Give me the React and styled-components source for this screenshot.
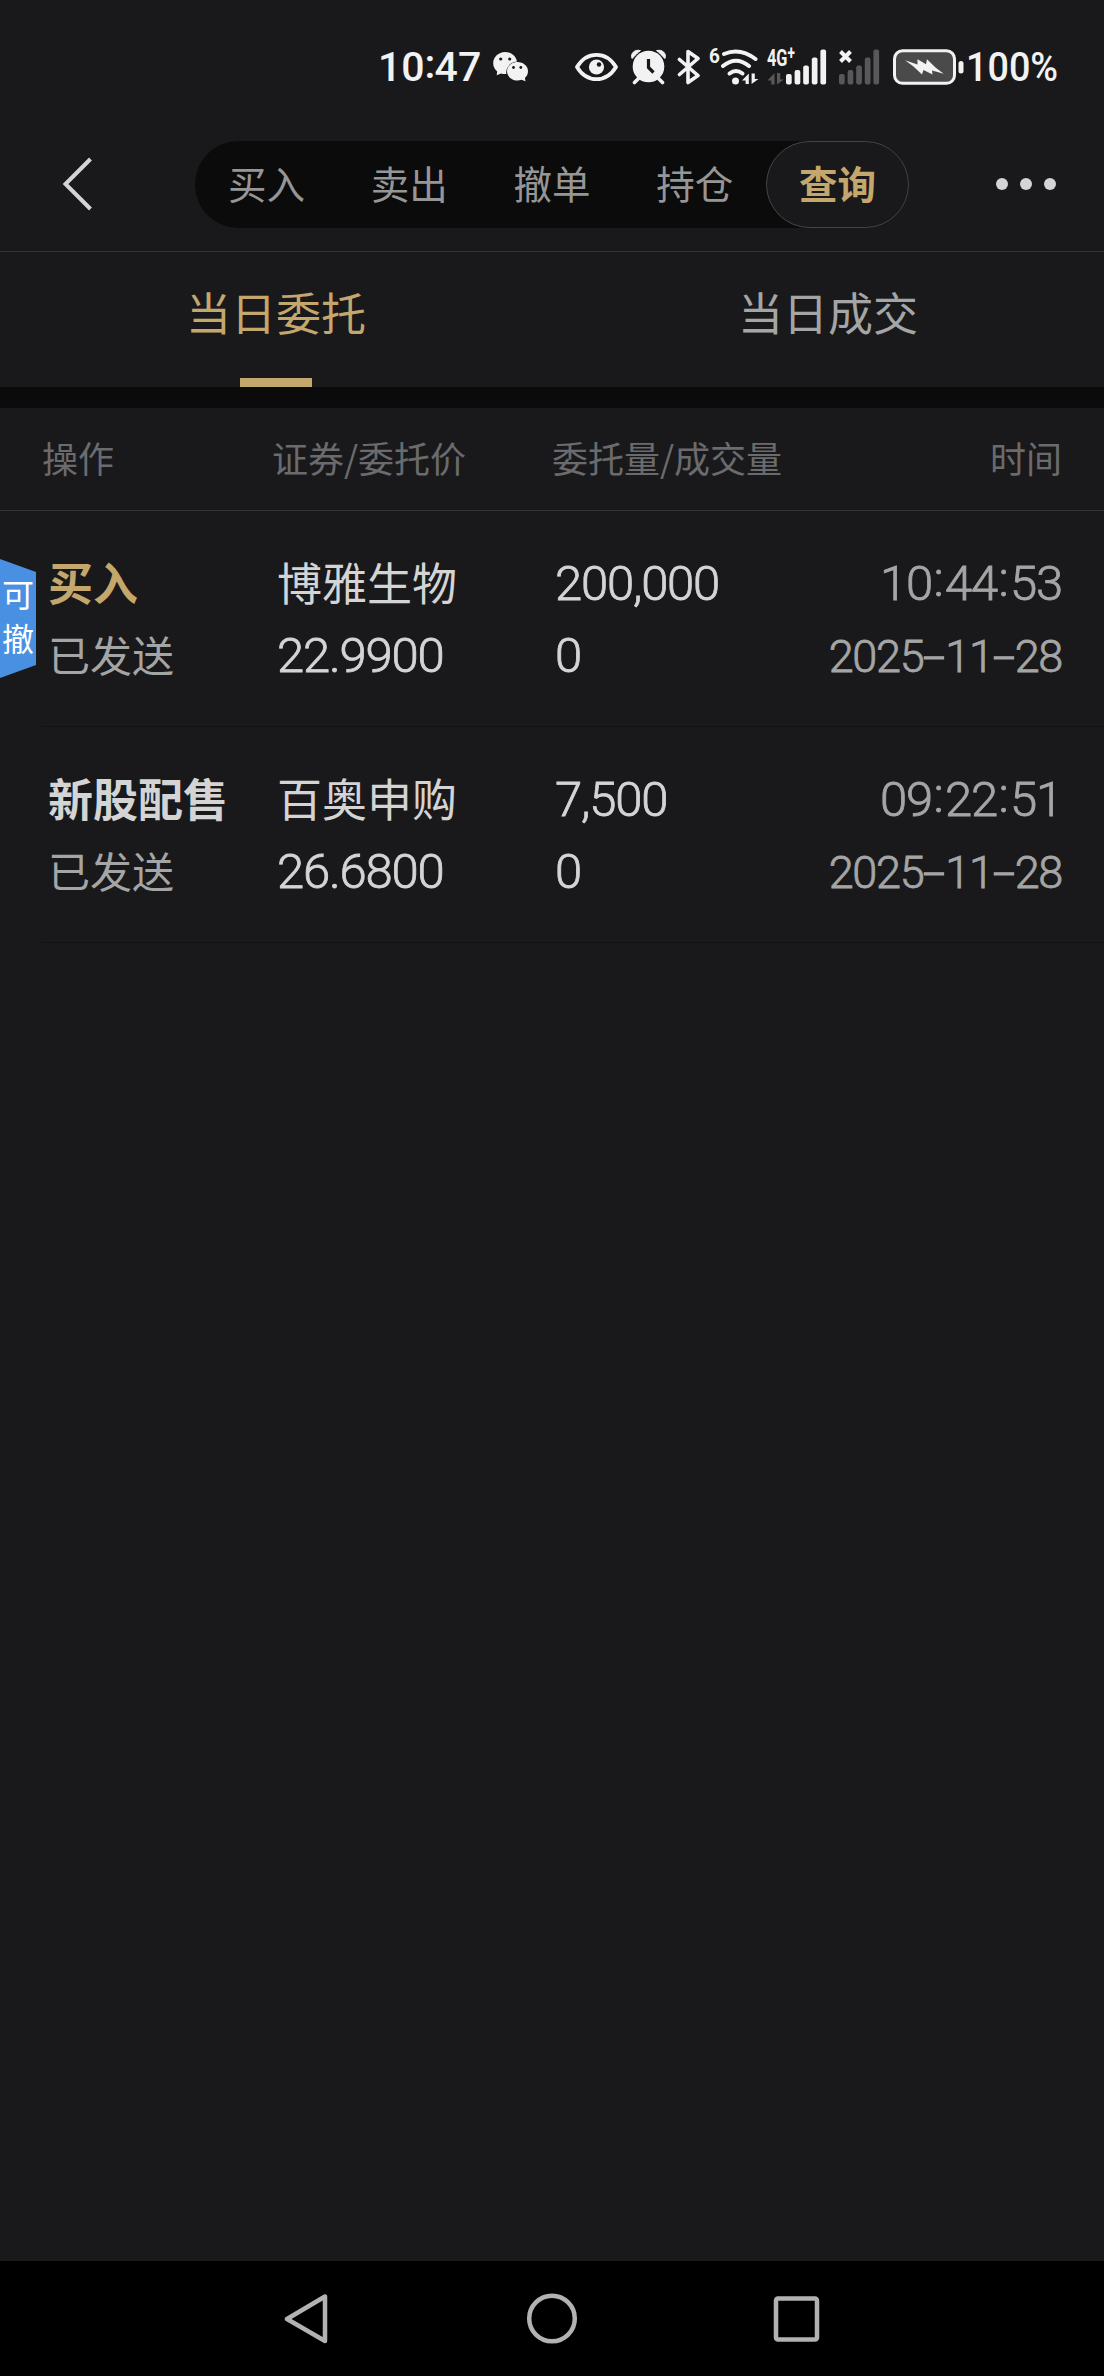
import React from "react";
import styled, { createGlobalStyle } from "styled-components";

const pills = ["买入", "卖出", "撤单", "持仓", "查询"];

const orders = [
  {
    action: "买入",
    buy: true,
    cancelable: true,
    status: "已发送",
    name: "博雅生物",
    price: "22.9900",
    amount: "200,000",
    filled: "0",
    time: "10:44:53",
    date: "2025-11-28",
  },
  {
    action: "新股配售",
    status: "已发送",
    name: "百奥申购",
    price: "26.6800",
    amount: "7,500",
    filled: "0",
    time: "09:22:51",
    date: "2025-11-28",
  },
];

const Wechat = () => (
  <svg width="36" height="32" viewBox="492 51 36 32" fill="#f2f2f2">
    <path d="M504 52C497.500 52 492.200 57 492.200 63.200C492.200 66.500 493.700 69.400 496.200 71.400L495.700 75.200L500 73.400C501.200 73.800 502.600 74 504 74C504.600 74 505 74 505.300 73.900C504.500 67.500 509.500 62 516 61.600C515 56 510 52 504 52Z" />
    <path d="M516.500 62C510.700 62 506 66.100 506 71.200C506 76.300 510.700 80.400 516.500 80.400C518 80.400 519.300 80.200 520.500 79.700L524.500 81.300L523.900 77.900C525.900 76.200 527 73.900 527 71.200C527 66.100 522.300 62 516.500 62Z" />
    <g fill="#19191b">
      <circle cx="499.700" cy="59" r="1.600" />
      <circle cx="508.700" cy="59" r="1.600" />
      <circle cx="512.500" cy="67.500" r="1.400" />
      <circle cx="519.800" cy="67.500" r="1.400" />
    </g>
  </svg>
);

const Eye = () => (
  <svg width="44" height="30" viewBox="574 52 44 30" fill="none">
    <path
      d="M576 67C580.500 59.500 587 54.800 595.500 54.800C604 54.800 610.500 59.500 615 67C610.500 74.500 604 79.200 595.500 79.200C587 79.200 580.500 74.500 576 67Z"
      stroke="#f2f2f2"
      strokeWidth="3.800"
      strokeLinejoin="round"
    />
    <circle cx="595.500" cy="67" r="7.600" fill="#f2f2f2" />
    <circle cx="598" cy="64.500" r="2.200" fill="#19191b" />
  </svg>
);

const Alarm = () => (
  <svg width="36" height="36" viewBox="630 48.500 36 36" fill="none">
    <path d="M631 58C629 53 634 48.300 639.500 50.200ZM664 58C666 53 661 48.300 655.500 50.200Z" fill="#f2f2f2" stroke="#f2f2f2" />
    <circle cx="647.500" cy="66" r="17" fill="#19191b" />
    <circle cx="647.500" cy="66" r="15.800" fill="#f2f2f2" />
    <path d="M637.500 78L633.500 82M657.500 78L661.500 82" stroke="#f2f2f2" strokeWidth="3.600" strokeLinecap="round" />
    <path d="M647.500 58.500V67L652.500 72" stroke="#19191b" strokeWidth="3.200" />
  </svg>
);

const Bluetooth = () => (
  <svg width="24" height="36" viewBox="676 48.500 24 36" fill="none">
    <path
      d="M678.500 59L697 75L687 82V51L697 58L678.500 74"
      stroke="#f2f2f2"
      strokeWidth="3.600"
      strokeLinecap="round"
      strokeLinejoin="round"
    />
  </svg>
);

const Wifi = () => (
  <svg width="39" height="36" viewBox="719 48.500 39 36" fill="none">
    <g stroke="#f2f2f2" strokeWidth="4" strokeLinecap="round">
      <path d="M722 53.500Q738 46.500 753.500 58.500" />
      <path d="M721 65.500Q734 55 747 65.500" />
      <path d="M727.500 73Q734 68 740.500 73" />
    </g>
    <circle cx="733.500" cy="80.500" r="3.500" fill="#f2f2f2" />
    <path d="M746.800 73V83.500H743.600V80H740ZM749.600 73V83.500L756.500 78.500H752.800V73Z" fill="#f2f2f2" />
  </svg>
);

const Arrows = () => (
  <svg width="17" height="12" viewBox="765 72 17 12" fill="#58585a">
    <path d="M772.500 72V83.500H769.300V79.500H765.500ZM775 72V83.500L781.800 78.500H778.200V72Z" />
  </svg>
);

const Bars = ({ color }) => (
  <svg width="41" height="36" viewBox="0 0 41 36" fill={color}>
    <rect x="0" y="25" width="5.700" height="10.500" rx="2" />
    <rect x="8.600" y="21" width="5.700" height="14.500" rx="2" />
    <rect x="17.200" y="16.500" width="5.700" height="19" rx="2" />
    <rect x="25.800" y="8.500" width="5.700" height="27" rx="2" />
    <rect x="34.400" y="0.500" width="5.700" height="35" rx="2" />
  </svg>
);

const Cross = () => (
  <svg width="13" height="13" viewBox="0 0 13 13">
    <path d="M1.500 1.500L11.500 11.500M11.500 1.500L1.500 11.500" stroke="#f2f2f2" strokeWidth="4" />
  </svg>
);

const Battery = () => (
  <svg width="71" height="36" viewBox="891 48 71 36">
    <rect x="892.500" y="49.800" width="60" height="32.500" rx="8" fill="#4a4a4b" stroke="#f2f2f2" strokeWidth="3" />
    <rect x="956.500" y="60" width="5" height="12.500" rx="2.500" fill="#f2f2f2" />
    <path d="M903 59.200L915.500 63.500L915.500 58.300L924 63.200L925 58.300L933.500 66.500L941.700 72.700L930 69.500L930.500 73.500L921.500 69L920 73.500L911.500 65.500Z" fill="#f2f2f2" />
  </svg>
);

// separators are set wider than the font's own and sit mid-height of the digits
const Spaced = ({ text, mark, width, stretch, lift }) =>
  text.split(mark).map((part, i) => (
    <React.Fragment key={i}>
      {i > 0 && (
        <Mark $width={width} $stretch={stretch} $lift={lift}>
          {mark}
        </Mark>
      )}
      {part}
    </React.Fragment>
  ));

const App = () => {
  return (
    <Page>
      <GlobalStyle />
      <StatusBar>
        <Clock>
          <Spaced text="10:47" mark=":" width={10} lift={3} />
        </Clock>
        <Slot $ml={13}>
          <Wechat />
        </Slot>
        <Slot $ml={46}>
          <Eye />
        </Slot>
        <Slot $ml={12}>
          <Alarm />
        </Slot>
        <Slot $ml={10}>
          <Bluetooth />
        </Slot>
        <WifiGen>6</WifiGen>
        <Wifi />
        <Signal>
          <Network>
            4G<sup>+</sup>
          </Network>
          <Arrows />
        </Signal>
        <Bars color="#f2f2f2" />
        <Dead>
          <Bars color="#58585a" />
          <Cross />
        </Dead>
        <Slot $ml={13}>
          <Battery />
        </Slot>
        <Percent>100%</Percent>
      </StatusBar>

      <TopBar>
        <Back>
          <svg width="32" height="54" viewBox="0 0 32 54" fill="none">
            <path d="M28.500 2L3.500 27L28.500 52" stroke="#d4d4d4" strokeWidth="4" />
          </svg>
        </Back>
        <Pills>
          {pills.map((label) => (
            <Pill key={label} $active={label === "查询"}>
              {label}
            </Pill>
          ))}
        </Pills>
        <More>
          <i />
          <i />
          <i />
        </More>
      </TopBar>

      <Tabs>
        <Tab $active>当日委托</Tab>
        <Tab>当日成交</Tab>
      </Tabs>

      <TableHead>
        <span>操作</span>
        <span>证券/委托价</span>
        <span>委托量/成交量</span>
        <span className="right">时间</span>
      </TableHead>

      <List>
        {orders.map((order) => (
          <Order key={order.name}>
            {order.cancelable && <Badge>可撤</Badge>}
            <Cell>
              <Action $buy={order.buy}>{order.action}</Action>
              <Status>{order.status}</Status>
            </Cell>
            <Cell>
              <Name>{order.name}</Name>
              <Num>{order.price}</Num>
            </Cell>
            <Cell>
              <Num>{order.amount}</Num>
              <Num>{order.filled}</Num>
            </Cell>
            <Cell $right>
              <Num $dim>
                <Spaced text={order.time} mark=":" width={13} lift={4} />
              </Num>
              <DateText>
                <Spaced text={order.date} mark="-" width={22} stretch={1.8} lift={0} />
              </DateText>
            </Cell>
          </Order>
        ))}
      </List>

      <NavBar>
        <svg width="48" height="54" viewBox="0 0 48 54">
          <path d="M41 4.500V49L3 27Z" />
        </svg>
        <svg width="52" height="54" viewBox="0 0 52 54">
          <circle cx="26" cy="26.500" r="22.800" />
        </svg>
        <svg width="48" height="54" viewBox="0 0 48 54">
          <rect x="4" y="6.500" width="41" height="41" rx="2" />
        </svg>
      </NavBar>
    </Page>
  );
};

export default App;

const GlobalStyle = createGlobalStyle`
  * {
    box-sizing: border-box;
  }
  body {
    margin: 0;
    background: #19191b;
    font-family: "Noto Sans CJK SC", sans-serif;
  }
  svg {
    display: block;
    flex-shrink: 0;
  }
`;

const Page = styled.div`
  width: 1104px;
  height: 2376px;
  display: flex;
  flex-direction: column;
  overflow: hidden;
  background: #19191b;
`;

const StatusBar = styled.div`
  height: 133px;
  padding-left: 378px;
  display: flex;
  align-items: center;
`;

const StatusText = styled.span`
  font-family: Roboto, sans-serif;
  font-size: 41px;
  font-weight: 500;
  line-height: 1;
  color: #f2f2f2;
  white-space: nowrap;
`;

const Clock = styled(StatusText)`
  width: 102px;
  padding-top: 2px;
`;

const Percent = styled(StatusText)`
  margin-left: 2px;
  padding-top: 2px;
  transform: scaleX(0.92);
  transform-origin: left;
`;

const Mark = styled.span`
  display: inline-block;
  width: ${(p) => p.$width}px;
  text-align: center;
  letter-spacing: 0;
  transform: translateY(${(p) => -p.$lift}px) scaleX(${(p) => p.$stretch || 1});
`;

const Slot = styled.div`
  display: flex;
  margin-left: ${(p) => p.$ml || 0}px;
`;

const WifiGen = styled.span`
  width: 12px;
  height: 36px;
  margin-left: 8px;
  font-family: Roboto, sans-serif;
  font-size: 21px;
  font-weight: 700;
  line-height: 14px;
  color: #f2f2f2;
  transform: scaleX(0.9);
  transform-origin: left;
`;

const Signal = styled.div`
  width: 19px;
  height: 36px;
  margin-left: 7px;
  display: flex;
  flex-direction: column;
  justify-content: space-between;
`;

const Network = styled.span`
  height: 18px;
  display: flex;
  font-family: Roboto, sans-serif;
  font-size: 24px;
  font-weight: 700;
  line-height: 18px;
  color: #f2f2f2;
  white-space: nowrap;
  transform: scaleX(0.68);
  transform-origin: left;

  sup {
    font-size: 20px;
    line-height: 8px;
  }
`;

const Dead = styled.div`
  position: relative;
  margin-left: 12px;

  svg:last-child {
    position: absolute;
    top: 1px;
    left: 0;
  }
`;

const TopBar = styled.div`
  height: 119px;
  padding: 8px 48px 24px 62px;
  display: flex;
  border-bottom: 1px solid #353537;
`;

const Back = styled.div`
  width: 133px;
  padding-top: 16px;
`;

const Pills = styled.div`
  width: 714px;
  height: 87px;
  display: flex;
  border-radius: 44px;
  background: #0b0b0b;
`;

const Pill = styled.div`
  flex: 1;
  display: flex;
  justify-content: center;
  align-items: center;
  padding-bottom: 4px;
  border-radius: 44px;
  border: 1px solid ${(p) => (p.$active ? "#454547" : "transparent")};
  background: ${(p) => (p.$active ? "#19191b" : "transparent")};
  color: ${(p) => (p.$active ? "#c4a76d" : "#969696")};
  font-size: 38.500px;
  font-weight: ${(p) => (p.$active ? 700 : 400)};
  line-height: 1;
`;

const More = styled.div`
  flex: 1;
  display: flex;
  justify-content: flex-end;
  align-items: center;
  gap: 12px;

  i {
    width: 12px;
    height: 12px;
    border-radius: 50%;
    background: #d4d4d4;
  }
`;

const Tabs = styled.div`
  height: 156px;
  display: flex;
  border-bottom: 21px solid #0b0b0b;
`;

const Tab = styled.div`
  flex: 1;
  display: flex;
  flex-direction: column;
  justify-content: space-between;
  align-items: center;
  padding-top: 37px;
  font-size: 45px;
  line-height: 46px;
  color: ${(p) => (p.$active ? "#c4a76d" : "#a4a5a5")};

  &::after {
    content: "";
    width: 72px;
    height: 9px;
    background: ${(p) => (p.$active ? "#c4a76d" : "transparent")};
  }
`;

const TableHead = styled.div`
  height: 103px;
  padding: 0 42px 4px;
  display: grid;
  grid-template-columns: 230px 280px 1fr 240px;
  align-items: center;
  border-bottom: 1px solid #353537;
  font-size: 36px;
  line-height: 1;
  color: #6b6b6d;
  white-space: nowrap;

  .right {
    text-align: right;
  }
`;

const List = styled.div`
  flex: 1;
`;

const Order = styled.div`
  position: relative;
  height: 216px;
  margin-left: 42px;
  padding: 35px 42px 0 6px;
  display: grid;
  grid-template-columns: 229px 278px 1fr 260px;
  border-bottom: 1px solid #121213;
`;

const Cell = styled.div`
  display: flex;
  flex-direction: column;
  align-items: ${(p) => (p.$right ? "flex-end" : "flex-start")};
  white-space: nowrap;
  line-height: 72px;
`;

const Action = styled.div`
  font-size: 45px;
  font-weight: 700;
  color: ${(p) => (p.$buy ? "#c4a76d" : "#d4d4d4")};
`;

const Status = styled.div`
  font-size: 42px;
  color: #a4a5a5;
`;

const Name = styled.div`
  font-size: 45px;
  color: #d4d4d4;
`;

const Num = styled.div`
  height: 72px;
  padding-top: 2px;
  font-family: Roboto, sans-serif;
  font-size: 49px;
  font-weight: 300;
  letter-spacing: -1.200px;
  color: ${(p) => (p.$dim ? "#a4a5a5" : "#d4d4d4")};
  -webkit-text-stroke: 0.800px currentColor;
`;

const DateText = styled(Num)`
  padding-top: 3px;
  font-size: 45px;
  letter-spacing: -1.300px;
  color: #a4a5a5;
`;

// tag stuck to the screen edge, tapered towards the row
const Badge = styled.div`
  position: absolute;
  top: 48px;
  left: -42px;
  width: 36px;
  height: 119px;
  padding: 12px 1px 0 2px;
  background: #4a90e2;
  clip-path: polygon(0 0, 100% 13px, 100% 106px, 0 100%);
  color: #fff;
  font-size: 32px;
  line-height: 44px;
  word-break: break-all;
`;

const NavBar = styled.div`
  height: 115px;
  padding: 0 284px;
  display: flex;
  justify-content: space-between;
  align-items: center;
  background: #000;

  svg {
    fill: none;
    stroke: #b2b2b2;
    stroke-width: 4.500px;
    stroke-linejoin: round;
  }
`;
